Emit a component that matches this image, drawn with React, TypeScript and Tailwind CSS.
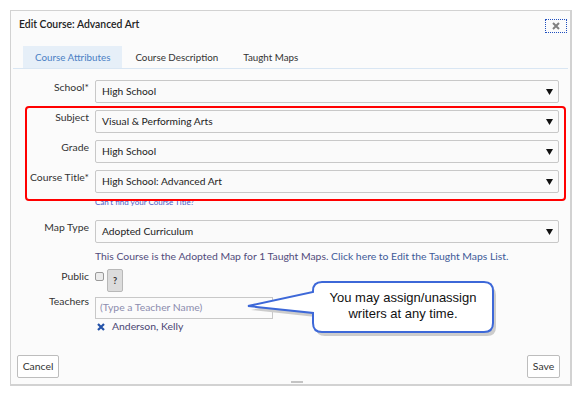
import React from "react";

const Arrow = () => (
  <svg width="7" height="6" viewBox="0 0 7 6">
    <path d="M0 0 H7 L3.5 6 Z" fill="#111" />
  </svg>
);

const Select = ({ text }: { text: string }) => (
  <div className="flex h-[23px] w-[464px] items-center justify-between rounded-[2px] border border-[#c8c8c8] bg-[#fafafa] pl-[6px] pr-[5px] text-[10.25px] text-[#222]">
    <span>{text}</span>
    <Arrow />
  </div>
);

const Row = ({
  label,
  children,
  labelClass = "",
}: {
  label: string;
  children: React.ReactNode;
  labelClass?: string;
}) => (
  <div className="flex items-start">
    <div className={`w-[62px] whitespace-nowrap text-right text-[10.4px] leading-[14px] text-[#333] ${labelClass}`}>{label}</div>
    <div className="ml-[6px]">{children}</div>
  </div>
);

export default function App() {
  return (
    <div
      className="relative h-[398px] w-[584px] overflow-hidden bg-white"
      style={{ fontFamily: "Lato, 'Open Sans', sans-serif" }}
    >
      <div className="ml-[10px] mt-[10px] flex h-[376px] w-[562px] flex-col border border-r-2 border-b-2 border-[#d2d2d2] bg-[#fbfbfb]">
        {/* header */}
        <div className="flex items-start justify-between pl-[8px] pr-[3px]">
          <div className="pt-[6px] text-[10.4px] font-semibold leading-[14px] text-[#222]">
            Edit Course: Advanced Art
          </div>
          <div className="mt-[8px] flex h-[14px] w-[22px] items-center justify-center border border-dotted border-[#1f4fbf]">
            <svg width="8" height="8" viewBox="0 0 8 8">
              <path d="M1 1 L7 7 M7 1 L1 7" stroke="#808080" strokeWidth="2" />
            </svg>
          </div>
        </div>

        {/* tabs */}
        <div className="mx-[2px] mt-[13px] flex border-b border-[#d9e6f3] pl-[10px] text-[9.8px]">
          <div className="flex h-[22px] items-center bg-[#e6eff8] px-[12px] text-[#4a80c4]">Course Attributes</div>
          <div className="flex h-[22px] items-center px-[13px] text-[#333]">Course Description</div>
          <div className="flex h-[22px] items-center px-[12px] text-[#333]">Taught Maps</div>
        </div>

        {/* form */}
        <div className="mt-[11px] flex flex-col pl-[16px]">
          <Row label="School*">
            <Select text="High School" />
          </Row>

          <div className="relative z-10 ml-[-2px] mt-[3px] flex w-[541px] flex-col gap-[7px] rounded-[4px] border-2 border-[#ff0000] pb-[6px] pt-[2px]">
            <Row label="Subject">
              <Select text="Visual & Performing Arts" />
            </Row>
            <Row label="Grade">
              <Select text="High School" />
            </Row>
            <Row label="Course Title*">
              <Select text="High School: Advanced Art" />
            </Row>
          </div>

          <div className="ml-[68px] mt-[-4px] text-[8px] leading-[10px] text-[#4a5ac8]">Can't find your Course Title?</div>

          <div className="mt-[13px]">
            <Row label="Map Type">
              <Select text="Adopted Curriculum" />
            </Row>
          </div>

          <div className="ml-[68px] mt-[6px] text-[10.4px] leading-[14px] text-[#524c7c]">
            This Course is the Adopted Map for 1 Taught Maps.{" "}
            <span className="text-[#405a98]">Click here to Edit the Taught Maps List.</span>
          </div>

          <div className="mt-[6px]">
            <Row label="Public">
              <div className="flex items-start">
                <div className="mt-[3px] h-[9px] w-[9px] rounded-[2px] border border-[#9a9a9a] bg-[#ececec]" />
                <div className="ml-[3px] flex h-[23px] w-[16px] items-center justify-center rounded-[2px] border border-[#b8b8b8] bg-[#dcdcdc] text-[9px] font-bold text-[#333]">
                  ?
                </div>
              </div>
            </Row>
          </div>

          <div className="mt-[5px]">
            <Row label="Teachers" labelClass="mt-[-3px]">
              <div className="flex h-[22px] w-[178px] items-center border border-[#c8c8c8] bg-[#fbfbfb] pl-[4px] text-[10.4px] text-[#8c8cae]">
                (Type a Teacher Name)
              </div>
              <div className="mt-[2px] flex h-[12px] items-center pl-[2px] text-[10.4px] text-[#4a4572]">
                <svg width="8" height="8" viewBox="0 0 8 8">
                  <path d="M1 1 L7 7 M7 1 L1 7" stroke="#2452a8" strokeWidth="2.2" />
                </svg>
                <span className="ml-[7px]">Anderson, Kelly</span>
              </div>
            </Row>
          </div>
        </div>

        {/* footer */}
        <div className="mt-auto flex items-end justify-between pb-[6px] pl-[6px] pr-[10px] text-[10.4px] text-[#333]">
          <div className="flex h-[23px] w-[42px] items-center justify-center rounded-[2px] border border-[#bdbdbd] bg-white">Cancel</div>
          <div className="flex h-[23px] w-[33px] items-center justify-center rounded-[2px] border border-[#bdbdbd] bg-white">Save</div>
        </div>
      </div>

      {/* scroll thumb */}
      <div className="absolute left-[291px] top-[381px] h-[2px] w-[12px] bg-[#c4c4c4]" />

      {/* callout */}
      <svg className="pointer-events-none absolute left-0 top-0" width="584" height="398" viewBox="0 0 584 398">
        <path
          d="M322 282 H484 Q493 282 493 291 V323 Q493 332 484 332 H322 Q313 332 313 323 V313 L248 306 L313 292 V291 Q313 282 322 282 Z"
          fill="#cccccc"
          transform="translate(3 4)"
        />
        <path
          d="M322 282 H484 Q493 282 493 291 V323 Q493 332 484 332 H322 Q313 332 313 323 V313 L248 306 L313 292 V291 Q313 282 322 282 Z"
          fill="#ffffff"
          stroke="#3d68d8"
          strokeWidth="2"
        />
      </svg>
      <div
        className="absolute left-[313px] top-[290px] w-[180px] text-center text-[13px] leading-[16px] text-[#111]"
        style={{ fontFamily: "'Liberation Sans', Arial, sans-serif" }}
      >
        You may assign/unassign
        <br />
        writers at any time.
      </div>
    </div>
  );
}
